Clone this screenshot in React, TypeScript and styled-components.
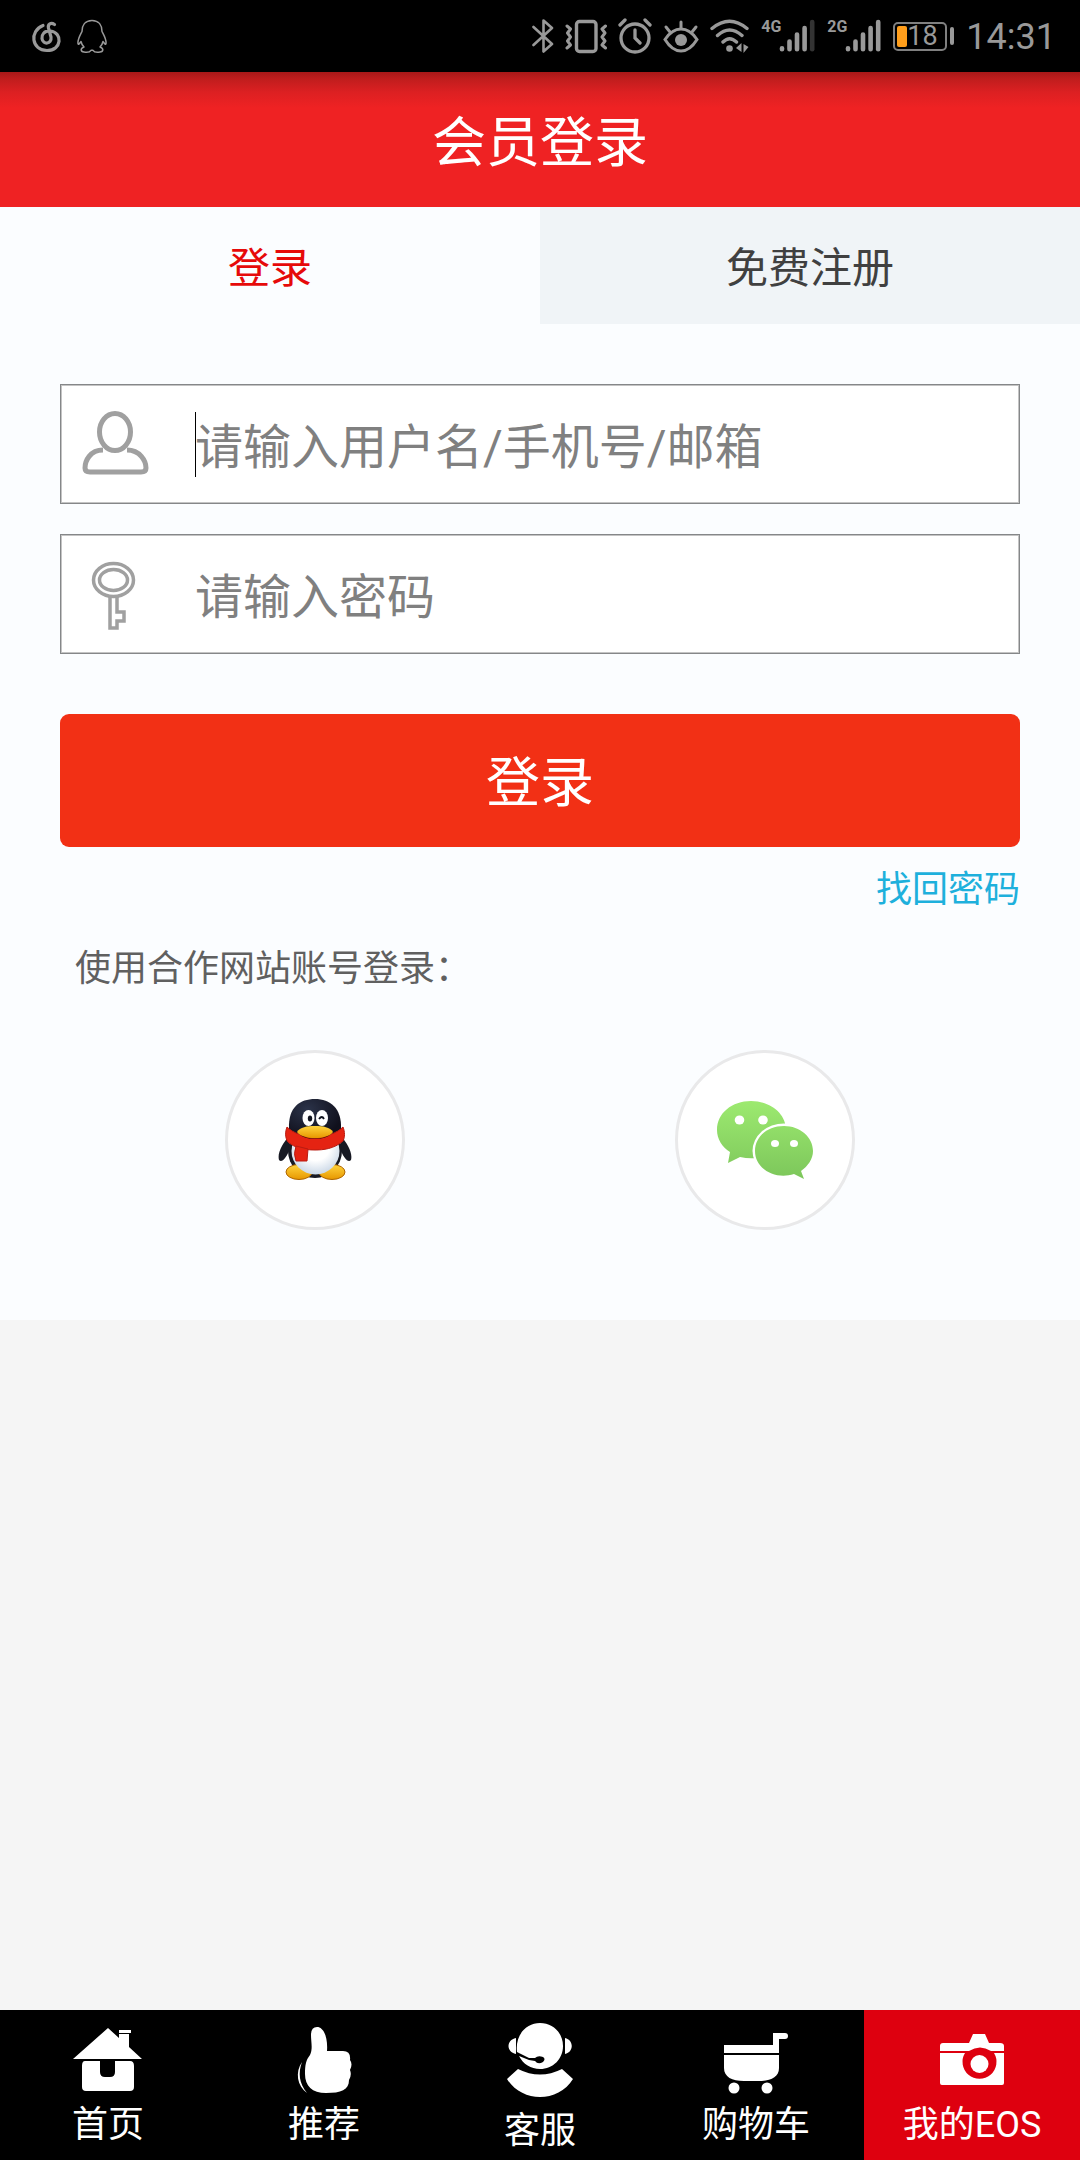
import React, { useState } from "react";
import styled, { createGlobalStyle } from "styled-components";

const GlobalStyle = createGlobalStyle`
  *, *::before, *::after { box-sizing: border-box; }
  body {
    margin: 0;
    background: #f5f5f5;
    font-family: Roboto, "Noto Sans CJK SC", sans-serif;
    font-weight: 400;
  }
  button, input { font: inherit; }
`;

const Page = styled.div`
  display: flex;
  flex-direction: column;
  min-height: 100vh;
`;

const StatusBar = styled.header`
  display: flex;
  align-items: center;
  justify-content: space-between;
  height: 72px;
  padding: 0 24px 0 30px;
  background: #000;
  color: #999;
`;

const StatusGroup = styled.div<{ $gap: number }>`
  display: flex;
  align-items: center;
  gap: ${(p) => p.$gap}px;
`;

const StatusIcon = styled.svg`
  display: block;
  flex: none;
`;

const Signal = styled.div`
  display: flex;
  align-items: flex-start;
  height: 36px;
`;

const Network = styled.span`
  width: 18px;
  font-size: 16px;
  font-weight: 700;
  line-height: 18px;
  white-space: nowrap;
`;

const Battery = styled.div`
  display: flex;
  align-items: center;
  gap: 3px;
`;

const BatteryBody = styled.div`
  display: flex;
  align-items: center;
  width: 54px;
  height: 29px;
  padding: 2px;
  border: 2px solid #808080;
  border-radius: 5px;
  font-size: 27px;
  line-height: 24px;
`;

const BatteryLevel = styled.span`
  width: 10px;
  height: 21px;
  border-radius: 2px;
  background: #ff9e1b;
`;

const BatteryTip = styled.span`
  width: 4px;
  height: 18px;
  border-radius: 2px;
  background: #999;
`;

const Clock = styled.time`
  padding-top: 2px;
  font-size: 36px;
  line-height: 42px;
`;

const TitleBar = styled.div`
  display: flex;
  align-items: center;
  justify-content: center;
  height: 135px;
  padding-top: 9px;
  background: linear-gradient(#a81818, #c01d1d 7px, #dc2022 20px, #ef2223 36px);
`;

const Title = styled.h1`
  margin: 0;
  color: #fff;
  font-size: 54px;
  font-weight: 400;
  line-height: 72px;
`;

const Panel = styled.main`
  padding-bottom: 90px;
  background: #fbfdff;
`;

const Tabs = styled.div`
  display: grid;
  grid-template-columns: 1fr 1fr;
`;

const Tab = styled.button<{ $active: boolean }>`
  height: 117px;
  padding: 6px 0 0;
  border: 0;
  background: ${(p) => (p.$active ? "#fbfdff" : "#f0f4f7")};
  color: ${(p) => (p.$active ? "#e60a0a" : "#404040")};
  font-size: 42px;
  line-height: 60px;
`;

const Form = styled.form`
  display: flex;
  flex-direction: column;
  padding: 60px 60px 0;
`;

const Field = styled.label`
  display: flex;
  align-items: center;
  height: 120px;
  margin-bottom: 30px;
  border: 1px solid #858789;
  background: #fff;
  box-shadow: inset 0 0 0 1px #c4c4c4;
`;

const FieldIcon = styled.svg`
  flex: none;
  width: 70px;
  height: 76px;
  margin: 0 45px 0 19px;
`;

const Input = styled.input`
  flex: 1;
  min-width: 0;
  height: 116px;
  padding: 6px 20px 0 0;
  border: 0;
  outline: 0;
  background: transparent;
  color: #333;
  font-size: 48px;
  caret-color: transparent;
  &::placeholder { color: #808080; opacity: 1; }
`;

const Caret = styled.span`
  width: 1px;
  height: 65px;
  margin-right: -1px;
  background: #000;
`;

const Submit = styled.button`
  height: 133px;
  margin-top: 30px;
  padding: 6px 0 0;
  border: 0;
  border-radius: 9px;
  background: #f23015;
  color: #fff;
  font-size: 54px;
  line-height: 72px;
`;

const Recover = styled.a`
  align-self: flex-end;
  margin-top: 16px;
  color: #1eb0dc;
  font-size: 36px;
  line-height: 54px;
  text-decoration: none;
`;

const PartnerLabel = styled.p`
  margin: 25px 75px 0;
  color: #606060;
  font-size: 36px;
  line-height: 54px;
`;

const Partners = styled.div`
  display: flex;
  justify-content: space-around;
  margin-top: 54px;
  padding: 0 90px;
`;

const Partner = styled.a`
  display: flex;
  align-items: center;
  justify-content: center;
  width: 180px;
  height: 180px;
  border: 3px solid #e9e9ea;
  border-radius: 50%;
  background: #fff;
`;

const Nav = styled.nav`
  display: grid;
  grid-template-columns: repeat(5, 1fr);
  height: 150px;
  margin-top: auto;
  background: #000;
`;

const NavLink = styled.a<{ $active?: boolean; $tall?: boolean }>`
  display: flex;
  flex-direction: column;
  align-items: center;
  padding-top: ${(p) => (p.$tall ? 12 : 15)}px;
  background: ${(p) => (p.$active ? "#de000f" : "transparent")};
  color: #fff;
  font-size: 36px;
  line-height: 48px;
  text-decoration: none;
  white-space: nowrap;
`;

const NavIcon = styled.svg<{ $tall?: boolean }>`
  display: block;
  width: 72px;
  height: ${(p) => (p.$tall ? 85 : 76)}px;
`;

function Bars({ faint }: { faint?: boolean }) {
  return (
    <StatusIcon width="36" height="36" viewBox="0 0 36 36" stroke="#999" strokeWidth="4.6" strokeLinecap="round">
      <path d="M3 30.3v1M10.5 23.5v7.8M18 16.5v14.8M25.6 10v21.3" />
      <path d="M33.2 4v27.3" stroke={faint ? "#333" : "#999"} />
    </StatusIcon>
  );
}

function StatusIcons() {
  return (
    <StatusGroup $gap={11}>
      <StatusIcon width="22" height="36" viewBox="0 0 22 36" fill="none" stroke="#999" strokeWidth="2.6" strokeLinejoin="round" strokeLinecap="round">
        <path d="M1.5 9L20 26 11.500 33.500V2.500L20 10 1.500 27" />
      </StatusIcon>
      <StatusIcon width="42" height="36" viewBox="0 0 42 36" fill="none" stroke="#999" strokeWidth="3" strokeLinecap="round" strokeLinejoin="round">
        <rect x="11.500" y="3.500" width="19.500" height="30" rx="3" strokeWidth="3.400" />
        <path d="M2 8l3.500 3-3 4 3 4-3 4 3 4L2 30M40.500 8L37 11l3 4-3 4 3 4-3 4 3.500 3" />
      </StatusIcon>
      <StatusIcon width="34" height="36" viewBox="0 0 34 36" fill="none" stroke="#999" strokeWidth="3.300" strokeLinecap="round">
        <circle cx="17" cy="20" r="14" />
        <path d="M17 12v8l5 5M2 7l5-5M32 7l-5-5" />
      </StatusIcon>
      <StatusIcon width="36" height="36" viewBox="0 0 36 36" fill="none" stroke="#999" strokeWidth="3" strokeLinecap="round">
        <path d="M2 21.500Q9 11 18 11t16 10.500Q27 33 18 33T2 21.500z" />
        <circle cx="18" cy="22" r="6" fill="#999" stroke="none" />
        <path d="M18 4v6M3 9l4 5M33 9l-4 5" />
      </StatusIcon>
      <StatusIcon width="39" height="36" viewBox="0 0 39 36" fill="none" stroke="#999" strokeWidth="3.400" strokeLinecap="round">
        <path d="M2 10.500Q19.500-4 37 10.500M7.500 17.500Q19.500 6.500 32 17.500M13 24Q19.500 17.500 26.500 24" />
        <circle cx="19.500" cy="30.500" r="3.300" fill="#999" stroke="none" />
        <path d="M31.500 25v9l-5.500-4zM33.500 26l5 3-5 6z" fill="#999" stroke="none" />
      </StatusIcon>
    </StatusGroup>
  );
}

function CloudMusic() {
  return (
    <StatusIcon width="32" height="36" viewBox="0 0 32 36" fill="none" stroke="#999" strokeWidth="3.200" strokeLinecap="round">
      <path d="M13 7.500C-1 13 1.500 32.500 17 32.500C32 32.500 33 14.500 20.500 13C14 12.500 11.500 17 12 20.500C12.800 27 22 26.500 21 19L18.500 10C17.500 6 21 4 24.500 6.500" />
    </StatusIcon>
  );
}

function PenguinOutline() {
  return (
    <StatusIcon width="30" height="36" viewBox="0 0 30 36" fill="none" stroke="#999" strokeWidth="1.500" strokeLinejoin="round">
      <path d="M15 2.500C8 2.500 5 7.500 5 13.500c-2 4-4.500 8-4 12 .5 2 1.500 0 3-2 .500 2.500 1.500 4 3 5.500-4 1.500-3.500 4.500 0 5 3 .500 6 0 7-1.700h2c1 1.700 4 2.200 7 1.700 3.500-.500 4-3.500 0-5 1.500-1.500 2.500-3 3-5.500 1.500 2 2.500 4 3 2 .500-4-2-8-4-12 0-6-3-11-10-11z" />
    </StatusIcon>
  );
}

function QQLogo() {
  return (
    <svg width="74" height="84" viewBox="0 0 74 84" aria-hidden="true">
      <defs>
        <radialGradient id="head" cx=".35" cy=".25" r=".7">
          <stop offset="0" stopColor="#2b3349" />
          <stop offset="1" stopColor="#10101c" />
        </radialGradient>
        <linearGradient id="beak" x2="0" y2="1">
          <stop offset="0" stopColor="#ffd43d" />
          <stop offset="1" stopColor="#e79700" />
        </linearGradient>
        <radialGradient id="belly" cx=".5" cy=".4" r=".6">
          <stop offset=".5" stopColor="#fff" />
          <stop offset="1" stopColor="#cbd8e7" />
        </radialGradient>
      </defs>
      <path d="M11 38C5 45-1 55 1 62c3 3 7-2 10-9zM63 38c6 7 12 17 10 24-3 3-7-2-10-9z" fill="#171923" />
      <ellipse cx="37" cy="53" rx="27" ry="27" fill="#171923" />
      <ellipse cx="21" cy="74" rx="13" ry="7.500" fill="url(#beak)" stroke="#ae6500" />
      <ellipse cx="54" cy="74" rx="13" ry="7.500" fill="url(#beak)" stroke="#ae6500" />
      <ellipse cx="37.500" cy="53" rx="24" ry="23.500" fill="url(#belly)" />
      <path d="M11 31C10 9 22 1 37 1s27 9 26 30c-1 15-51 15-52 0z" fill="url(#head)" />
      <path d="M9 29c13 13 43 13 56 0 2 5 2 10 0 14-9 8-20 9-28 9-11 0-20-2-27-8-3-4-3-10-1-15z" fill="#e52312" stroke="#b91b11" />
      <path d="M18 48l12 3-1 12H18q-3-7 0-15z" fill="#e52312" stroke="#b91b11" />
      <path d="M20 35q17 11 34 0-5 6-17 6t-17-6z" fill="#4d1707" />
      <path d="M19 34c3-5 10-6 18-6s15 1 18 6c-6 8-30 8-36 0z" fill="url(#beak)" />
      <ellipse cx="30.500" cy="20" rx="6" ry="8" fill="#fff" />
      <ellipse cx="44" cy="20" rx="6" ry="8" fill="#fff" />
      <ellipse cx="32" cy="20.500" rx="2.200" ry="3" fill="#10131f" />
      <path d="M41 21q3-4 5 0" fill="none" stroke="#10131f" strokeWidth="1.800" />
    </svg>
  );
}

function WeChatLogo() {
  return (
    <svg width="98" height="80" viewBox="0 0 98 80" aria-hidden="true">
      <defs>
        <linearGradient id="chat" gradientUnits="userSpaceOnUse" x1="0" y1="0" x2="0" y2="78">
          <stop offset="0" stopColor="#9dea70" />
          <stop offset="1" stopColor="#7dc75b" />
        </linearGradient>
      </defs>
      <path d="M35 1C16 1 1 13 1 30c0 9 5 17 13 22l-2 11 12-6c21 5 46-4 46-27C70 13 54 1 35 1z" fill="url(#chat)" />
      <ellipse cx="68" cy="51" rx="31.500" ry="27.500" fill="#fff" />
      <path d="M68 26C51 26 39 37 39 51c0 18 20 29 39 23l10 5-3-8c7-5 12-12 12-20 0-14-13-25-29-25z" fill="url(#chat)" />
      <ellipse cx="23.500" cy="20" rx="4.800" ry="4.500" fill="#fff" />
      <ellipse cx="47" cy="20" rx="4.800" ry="4.500" fill="#fff" />
      <ellipse cx="59" cy="43.500" rx="4" ry="3.600" fill="#fff" />
      <ellipse cx="78" cy="43.500" rx="4" ry="3.600" fill="#fff" />
    </svg>
  );
}

const navItems = [
  {
    label: "首页",
    icon: (
      <>
        <path d="M1 44L36 13l11 10v-4h10v13l13 12zM47 15h12v3H47z" />
        <path d="M13 46h15v11q0 5 5 5h5q5 0 5-5V46h15q4 0 4 5v21q0 4-4 4H14q-4 0-4-4V51q0-5 3-5z" />
      </>
    ),
  },
  {
    label: "推荐",
    icon: (
      <>
        <path d="M23 20q0-8 6-8c7 0 11 11 10 24h16q8 0 7 9 3 4 0 10 2 5-1 10c0 10-8 13-23 13-14 0-21-7-21-19 0-9 1-14 5-19 3-6 1-13 1-20z" />
        <path d="M14 47c-4 11-3 21 5 31C9 71 7 57 14 47z" />
      </>
    ),
  },
  {
    label: "客服",
    tall: true,
    icon: (
      <>
        <path d="M36 11c13 0 23 10 23 23S49 57 36 57c-9 0-17-5-21-13l10 4 6 1q3 4 8 1 3-3 0-5-5-2-8 1h-6l-12-6C11 23 22 11 36 11zM12 26v16C2 40 2 28 12 26zM61 26c9 2 9 14 0 16z" />
        <path d="M14 57q22 11 44 0l11 10C54 91 18 91 3 67z" />
      </>
    ),
  },
  {
    label: "购物车",
    icon: (
      <>
        <path d="M4 30h49V18h12q3 0 3 3t-3 3h-6v14H4zM4 40h55v13c0 9-8 13-20 13H24C12 66 4 62 4 53z" />
        <circle cx="14" cy="73" r="5.500" />
        <circle cx="47" cy="73" r="5.500" />
      </>
    ),
  },
  {
    label: "我的EOS",
    active: true,
    icon: (
      <>
        <path d="M4 36v-5q0-3 3-3h26l4-9h12l4 9h11q4 0 4 3v5H55q-11-7-22 0zM4 38h25a17 17 0 1 0 29 0h10v30q0 2-2 2H6q-2 0-2-2z" />
        <circle cx="43.500" cy="49" r="9" />
      </>
    ),
  },
];

export default function App() {
  const [tab, setTab] = useState(0);
  const [name, setName] = useState("");
  return (
    <Page>
      <GlobalStyle />
      <StatusBar>
        <StatusGroup $gap={15}>
          <CloudMusic />
          <PenguinOutline />
        </StatusGroup>
        <StatusGroup $gap={12}>
          <StatusIcons />
          <Signal><Network>4G</Network><Bars faint /></Signal>
          <Signal><Network>2G</Network><Bars /></Signal>
          <Battery>
            <BatteryBody><BatteryLevel />18</BatteryBody>
            <BatteryTip />
          </Battery>
          <Clock>14:31</Clock>
        </StatusGroup>
      </StatusBar>
      <TitleBar><Title>会员登录</Title></TitleBar>
      <Panel>
        <Tabs>
          {["登录", "免费注册"].map((text, i) => (
            <Tab key={text} type="button" $active={tab === i} onClick={() => setTab(i)}>{text}</Tab>
          ))}
        </Tabs>
        <Form onSubmit={(e) => e.preventDefault()}>
          <Field>
            <FieldIcon viewBox="0 -4 70 76" fill="none" stroke="#a0a0a0" strokeWidth="5">
              <ellipse cx="35" cy="22" rx="15.500" ry="18.500" />
              <path d="M23 40C10 40 5 51 5 58q0 4 5 4h51q5 0 5-4c0-7-6-18-19-18" />
            </FieldIcon>
            {name === "" && <Caret />}
            <Input aria-label="用户名" placeholder="请输入用户名/手机号/邮箱" value={name} onChange={(e) => setName(e.target.value)} />
          </Field>
          <Field>
            <FieldIcon viewBox="0 -4 70 76" fill="none" stroke="#a0a0a0" strokeWidth="3.500">
              <ellipse cx="33.500" cy="20" rx="20" ry="16.500" />
              <ellipse cx="33.500" cy="20" rx="14" ry="10.500" />
              <path d="M30 36v32h7v-7h7v-9h-7V36" />
            </FieldIcon>
            <Input type="password" aria-label="密码" placeholder="请输入密码" />
          </Field>
          <Submit type="submit">登录</Submit>
          <Recover href="#recover">找回密码</Recover>
        </Form>
        <PartnerLabel>使用合作网站账号登录：</PartnerLabel>
        <Partners>
          <Partner href="#qq" aria-label="QQ"><QQLogo /></Partner>
          <Partner href="#wechat" aria-label="微信"><WeChatLogo /></Partner>
        </Partners>
      </Panel>
      <Nav>
        {navItems.map((item) => (
          <NavLink key={item.label} href="#nav" $active={item.active} $tall={item.tall}>
            <NavIcon $tall={item.tall} viewBox={item.tall ? "0 10 72 85" : "0 10 72 76"} fill="#fff">{item.icon}</NavIcon>
            {item.label}
          </NavLink>
        ))}
      </Nav>
    </Page>
  );
}
